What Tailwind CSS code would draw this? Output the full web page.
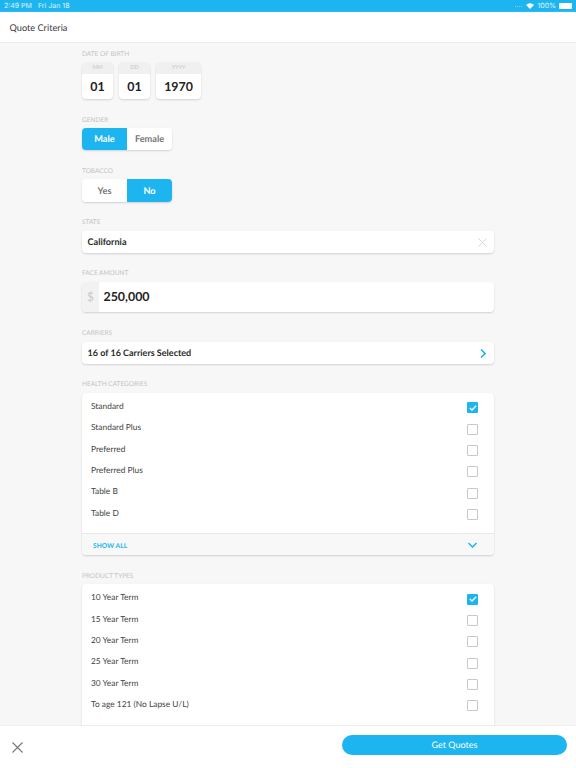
<!DOCTYPE html>
<html lang="en">
<head>
    <meta charset="UTF-8">
    <meta name="viewport" content="width=device-width, initial-scale=1.0">
    <title>Quote Criteria</title>
    <script src="https://cdn.jsdelivr.net/npm/@tailwindcss/browser@4"></script>
</head>
<body class="font-['Lato',sans-serif] bg-[#f7f7f7] [text-rendering:geometricPrecision]">
<div class="flex flex-col h-[768px] w-[576px] overflow-hidden">

    <!-- Status bar -->
    <div class="h-[12px] shrink-0 bg-[#1db5ef] border-b border-[#2fbdf2] text-white/85 text-[7px] leading-[11px] flex items-center justify-between pl-[4px] pr-[4px] font-['Inter',sans-serif]">
        <div class="flex gap-[6px]"><span>2:49 PM</span><span>Fri Jan 18</span></div>
        <div class="flex items-center gap-[3px]">
            <div class="flex gap-[1px] items-end mr-[1px] mt-[2px]">
                <span class="w-[1px] h-[1px] bg-white/40"></span>
                <span class="w-[1px] h-[1px] bg-white/40"></span>
                <span class="w-[1px] h-[1px] bg-white/40"></span>
                <span class="w-[1px] h-[1px] bg-white/40"></span>
            </div>
            <svg width="8" height="6" viewBox="0 0 8 6"><path d="M0 2 A5.6 5.6 0 0 1 8 2 L4 6 Z" fill="#fff"/></svg>
            <span>100%</span>
            <span class="w-[13px] h-[6px] bg-white rounded-[1px]"></span>
        </div>
    </div>

    <!-- Header -->
    <div class="h-[31px] shrink-0 bg-white border-b border-[#ececec] flex items-center pl-[9.5px] pt-[1px] text-[9.2px] text-[#3a3a3a]">Quote Criteria</div>

    <!-- Form -->
    <div class="flex-1 overflow-hidden pl-[82px] pr-[82px] pt-[6px]">
        <div class="text-[6.5px] leading-[11px] uppercase text-[#c4c4c4] mb-[2px]">Date of Birth</div>
        <div class="flex gap-[6px] mb-[16px]">
            <div class="w-[31px] h-[37px] rounded-[4px] bg-white shadow-[0_1px_2px_rgba(0,0,0,0.15)] overflow-hidden">
                <div class="h-[12px] bg-[#f0f0f0] text-[5.5px] leading-[12px] text-center text-[#c4c4c4]">MM</div>
                <div class="h-[25px] text-[12.4px] leading-[25px] font-bold text-center text-[#222]">01</div>
            </div>
            <div class="w-[31px] h-[37px] rounded-[4px] bg-white shadow-[0_1px_2px_rgba(0,0,0,0.15)] overflow-hidden">
                <div class="h-[12px] bg-[#f0f0f0] text-[5.5px] leading-[12px] text-center text-[#c4c4c4]">DD</div>
                <div class="h-[25px] text-[12.4px] leading-[25px] font-bold text-center text-[#222]">01</div>
            </div>
            <div class="w-[45px] h-[37px] rounded-[4px] bg-white shadow-[0_1px_2px_rgba(0,0,0,0.15)] overflow-hidden">
                <div class="h-[12px] bg-[#f0f0f0] text-[5.5px] leading-[12px] text-center text-[#c4c4c4]">YYYY</div>
                <div class="h-[25px] text-[12.4px] leading-[25px] font-bold text-center text-[#222]">1970</div>
            </div>
        </div>

        <div class="text-[6.5px] leading-[11px] uppercase text-[#c4c4c4] mb-[2px]">Gender</div>
        <div class="flex w-[90px] h-[22px] rounded-[4px] overflow-hidden shadow-[0_1px_2px_rgba(0,0,0,0.15)] mb-[16px] text-[9.2px] font-bold">
            <div class="w-[45px] bg-[#1db5ef] text-white text-center leading-[22px]">Male</div>
            <div class="w-[45px] bg-white text-[#777] text-center leading-[22px]">Female</div>
        </div>

        <div class="text-[6.5px] leading-[11px] uppercase text-[#c4c4c4] mb-[2px]">Tobacco</div>
        <div class="flex w-[90px] h-[23px] rounded-[4px] overflow-hidden shadow-[0_1px_2px_rgba(0,0,0,0.15)] mb-[15px] text-[9.2px] font-bold">
            <div class="w-[45px] bg-white text-[#777] text-center leading-[23px]">Yes</div>
            <div class="w-[45px] bg-[#1db5ef] text-white text-center leading-[23px]">No</div>
        </div>

        <div class="text-[6.5px] leading-[11px] uppercase text-[#c4c4c4] mb-[3px]">State</div>
        <div class="h-[22px] rounded-[4px] bg-white shadow-[0_1px_2px_rgba(0,0,0,0.15)] flex items-center justify-between pl-[5.5px] pr-[7px] mb-[15px]">
            <span class="text-[9.1px] font-bold text-[#2a2a2a]">California</span>
            <svg width="9" height="9" viewBox="0 0 9 9" fill="none" stroke="#d6d6d6" stroke-width="1"><path d="M0.5 0.5 L8.5 8.5 M8.5 0.5 L0.5 8.5"/></svg>
        </div>

        <div class="text-[6.5px] leading-[11px] uppercase text-[#c4c4c4] mb-[3px]">Face Amount</div>
        <div class="h-[30px] rounded-[4px] bg-white shadow-[0_1px_2px_rgba(0,0,0,0.15)] flex items-center overflow-hidden mb-[16px]">
            <div class="w-[17px] h-full bg-[#f2f2f2] text-[12px] leading-[30px] text-center text-[#c8c8c8]">$</div>
            <span class="pl-[4.5px] text-[12.4px] font-bold text-[#222]">250,000</span>
        </div>

        <div class="text-[6.5px] leading-[11px] uppercase text-[#c4c4c4] mb-[3px]">Carriers</div>
        <div class="h-[22px] rounded-[4px] bg-white shadow-[0_1px_2px_rgba(0,0,0,0.15)] flex items-center justify-between pl-[5.5px] pr-[8px] mb-[15px]">
            <span class="text-[9px] font-bold text-[#2a2a2a]">16 of 16 Carriers Selected</span>
            <svg width="6" height="9" viewBox="0 0 6 9" fill="none" stroke="#1db5ef" stroke-width="1.6"><path d="M1 0.5 L5 4.5 L1 8.5"/></svg>
        </div>

        <div class="text-[6.5px] leading-[11px] uppercase text-[#c4c4c4] mb-[3px]">Health Categories</div>
        <div class="rounded-[4px] bg-white shadow-[0_1px_2px_rgba(0,0,0,0.15)] overflow-hidden mb-[16px]">
            <div class="pt-[2.5px] pb-[9.5px] pl-[9px] pr-[16px] text-[8.4px] text-[#444]">
                <div class="h-[21.4px] flex items-center justify-between"><span>Standard</span><span class="w-[11px] h-[11px] mt-[3px] rounded-[1px] bg-[#1db5ef] flex items-center justify-center"><svg width="8" height="6" viewBox="0 0 8 6" fill="none" stroke="#fff" stroke-width="1.3"><path d="M0.8 3 L3 5 L7.2 0.8"/></svg></span></div>
                <div class="h-[21.4px] flex items-center justify-between"><span>Standard Plus</span><span class="w-[11px] h-[11px] mt-[3px] rounded-[1px] border border-[#c8c8c8]"></span></div>
                <div class="h-[21.4px] flex items-center justify-between"><span>Preferred</span><span class="w-[11px] h-[11px] mt-[3px] rounded-[1px] border border-[#c8c8c8]"></span></div>
                <div class="h-[21.4px] flex items-center justify-between"><span>Preferred Plus</span><span class="w-[11px] h-[11px] mt-[3px] rounded-[1px] border border-[#c8c8c8]"></span></div>
                <div class="h-[21.4px] flex items-center justify-between"><span>Table B</span><span class="w-[11px] h-[11px] mt-[3px] rounded-[1px] border border-[#c8c8c8]"></span></div>
                <div class="h-[21.4px] flex items-center justify-between"><span>Table D</span><span class="w-[11px] h-[11px] mt-[3px] rounded-[1px] border border-[#c8c8c8]"></span></div>
            </div>
            <div class="h-[22px] bg-[#f8f8f8] border-t border-[#e8e8e8] flex items-center justify-between pl-[11px] pr-[17px]">
                <span class="pt-[2px] text-[6.7px] font-bold uppercase text-[#1db5ef]">Show All</span>
                <svg width="9" height="6" viewBox="0 0 9 6" fill="none" stroke="#1db5ef" stroke-width="1.5"><path d="M0.5 1 L4.5 5 L8.5 1"/></svg>
            </div>
        </div>

        <div class="text-[6.5px] leading-[11px] uppercase text-[#c4c4c4] mb-[2px]">Product Types</div>
        <div class="rounded-t-[4px] bg-white shadow-[0_1px_2px_rgba(0,0,0,0.15)] pt-[2.5px] pb-[40px] pl-[9px] pr-[16px] text-[8.4px] text-[#444]">
            <div class="h-[21.4px] flex items-center justify-between"><span>10 Year Term</span><span class="w-[11px] h-[11px] mt-[3px] rounded-[1px] bg-[#1db5ef] flex items-center justify-center"><svg width="8" height="6" viewBox="0 0 8 6" fill="none" stroke="#fff" stroke-width="1.3"><path d="M0.8 3 L3 5 L7.2 0.8"/></svg></span></div>
            <div class="h-[21.4px] flex items-center justify-between"><span>15 Year Term</span><span class="w-[11px] h-[11px] mt-[3px] rounded-[1px] border border-[#c8c8c8]"></span></div>
            <div class="h-[21.4px] flex items-center justify-between"><span>20 Year Term</span><span class="w-[11px] h-[11px] mt-[3px] rounded-[1px] border border-[#c8c8c8]"></span></div>
            <div class="h-[21.4px] flex items-center justify-between"><span>25 Year Term</span><span class="w-[11px] h-[11px] mt-[3px] rounded-[1px] border border-[#c8c8c8]"></span></div>
            <div class="h-[21.4px] flex items-center justify-between"><span>30 Year Term</span><span class="w-[11px] h-[11px] mt-[3px] rounded-[1px] border border-[#c8c8c8]"></span></div>
            <div class="h-[21.4px] flex items-center justify-between"><span>To age 121 (No Lapse U/L)</span><span class="w-[11px] h-[11px] mt-[3px] rounded-[1px] border border-[#c8c8c8]"></span></div>
        </div>
    </div>

    <!-- Footer -->
    <div class="h-[43px] shrink-0 bg-white border-t border-[#eeeeee] flex items-center justify-between pl-[12px] pr-[9px]">
        <svg width="11" height="11" viewBox="0 0 11 11" fill="none" stroke="#777" stroke-width="1.1"><path d="M0.5 0.5 L10.5 10.5 M10.5 0.5 L0.5 10.5"/></svg>
        <div class="w-[225px] h-[20px] mb-[4px] rounded-full bg-[#1db5ef] text-white text-[9px] leading-[19px] text-center">Get Quotes</div>
    </div>
</div>
</body>
</html>
